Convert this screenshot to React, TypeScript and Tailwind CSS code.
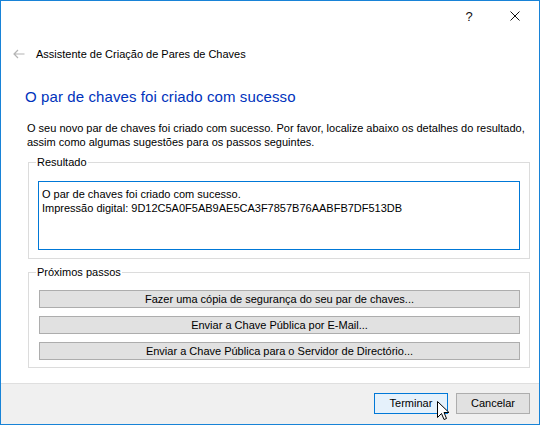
import React from "react";

function GroupBox({ label, children, className }: { label: string; children: React.ReactNode; className?: string }) {
  return (
    <fieldset className={"border border-[#dcdcdc] ml-[27px] mr-[9px] " + (className ?? "")}>
      <legend className="ml-[7px] px-[1px] leading-[14px]">{label}</legend>
      {children}
    </fieldset>
  );
}

function ActionButton({ children }: { children: React.ReactNode }) {
  return (
    <button className="h-[18px] w-full bg-[#e1e1e1] border border-[#adadad] leading-[16px] text-center text-black">
      {children}
    </button>
  );
}

export default function App() {
  return (
    <div className="w-[540px] h-[425px] border border-[#1883d7] bg-white flex flex-col font-['Liberation_Sans',Arial,sans-serif] text-[11px] text-black relative overflow-hidden">
      {/* title bar */}
      <div className="h-[30px] flex items-center justify-end shrink-0">
        <div className="w-[46px] flex justify-center pr-[2px]">
          <span className="text-[13px] leading-none text-[#111]">?</span>
        </div>
        <div className="w-[46px] flex justify-center pr-[2px]">
          <svg width="10" height="10" viewBox="0 0 10 10">
            <path d="M0.5 0.5 L9.5 9.5 M9.5 0.5 L0.5 9.5" stroke="#111" strokeWidth="1" />
          </svg>
        </div>
      </div>

      {/* header row */}
      <div className="mt-[13px] h-[20px] flex items-center shrink-0">
        <div className="w-[35px] flex justify-center pl-[1px]">
          <svg width="12" height="10" viewBox="0 0 12 10">
            <path d="M11.5 5 H1 M5 1 L1 5 L5 9" stroke="#b4b4b4" strokeWidth="1.2" fill="none" />
          </svg>
        </div>
        <span className="text-[11px]">Assistente de Criação de Pares de Chaves</span>
      </div>

      {/* heading */}
      <div className="mt-[22px] h-[22px] flex items-center pl-[24px] text-[15px] tracking-[0.1px] text-[#0033bc] shrink-0">
        O par de chaves foi criado com sucesso
      </div>

      {/* paragraph */}
      <p className="mt-[13px] pl-[26px] pr-[10px] leading-[14px] shrink-0">
        O seu novo par de chaves foi criado com sucesso. Por favor, localize abaixo os detalhes do resultado,
        <br />
        assim como algumas sugestões para os passos seguintes.
      </p>

      {/* result group */}
      <GroupBox label="Resultado" className="mt-[6px] shrink-0">
        <div className="pt-[12px] pb-[8px] pl-[9px] pr-[9px]">
          <div className="h-[69px] border border-[#0078d7] px-[3px] pt-[5px] leading-[14px]">
            <div>O par de chaves foi criado com sucesso.</div>
            <div>Impressão digital: 9D12C5A0F5AB9AE5CA3F7857B76AABFB7DF513DB</div>
          </div>
        </div>
      </GroupBox>

      {/* next steps group */}
      <GroupBox label="Próximos passos" className="mt-[6px] shrink-0">
        <div className="pt-[11px] pb-[7px] pl-[10px] pr-[9px] flex flex-col gap-[8px]">
          <ActionButton>Fazer uma cópia de segurança do seu par de chaves...</ActionButton>
          <ActionButton>Enviar a Chave Pública por E-Mail...</ActionButton>
          <ActionButton>Enviar a Chave Pública para o Servidor de Directório...</ActionButton>
        </div>
      </GroupBox>

      <div className="flex-1" />

      {/* footer */}
      <div className="h-[41px] border-t border-[#dfdfdf] bg-[#f0f0f0] flex items-start justify-end gap-[8px] pt-[9px] pr-[9px] shrink-0">
        <button className="w-[74px] h-[21px] bg-[#e5f1fb] border border-[#0078d7] text-black">Terminar</button>
        <button className="w-[74px] h-[21px] bg-[#e1e1e1] border border-[#adadad] text-black">Cancelar</button>
      </div>

      {/* mouse cursor */}
      <svg className="absolute left-[436px] top-[400px]" width="13" height="21" viewBox="0 0 13 21">
        <path d="M0.5 0.5 L0.5 16.5 L4.5 12.5 L7 18.5 L9.5 17.5 L7 11.5 L12 11.5 Z" fill="#fff" stroke="#000" strokeWidth="1" strokeLinejoin="miter" />
      </svg>
    </div>
  );
}
